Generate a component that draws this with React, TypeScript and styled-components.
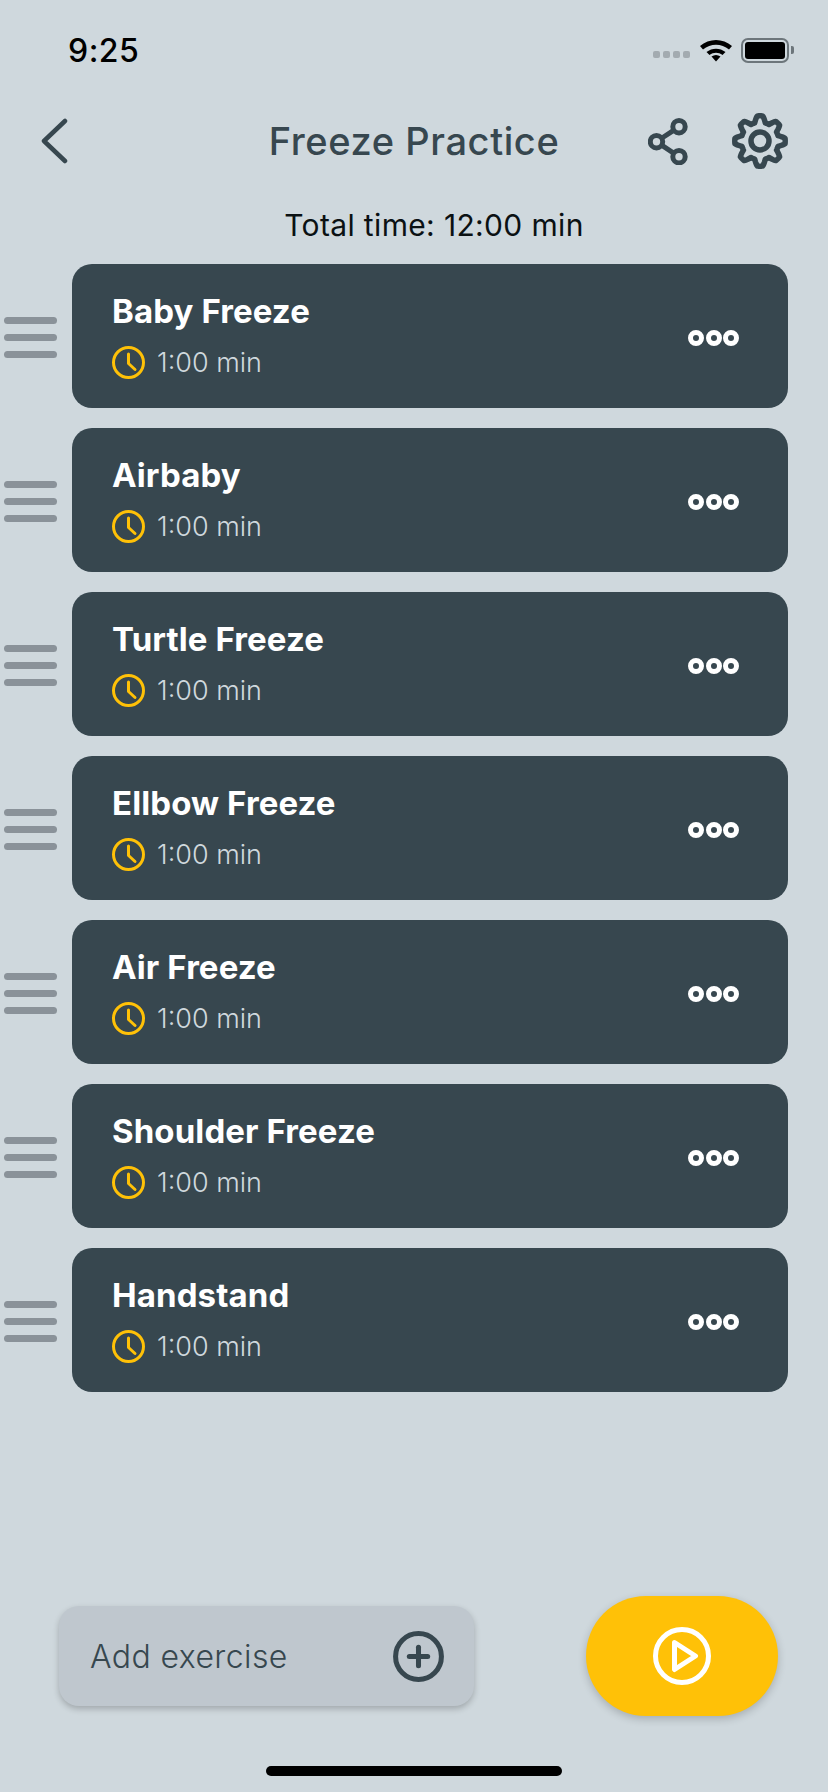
import React from "react";
import styled, { createGlobalStyle } from "styled-components";
import { CirclePlus } from "lucide-react";

const exercises = [
  "Baby Freeze",
  "Airbaby",
  "Turtle Freeze",
  "Ellbow Freeze",
  "Air Freeze",
  "Shoulder Freeze",
  "Handstand",
];

// outline of the gear, eight rounded teeth around the centre
function gearPath() {
  const points: string[] = [];
  for (let i = 0; i < 240; i++) {
    const angle = (i / 240) * Math.PI * 2;
    const wave = Math.max(-1, Math.min(1, 1.5 * Math.cos(angle * 8)));
    const r = 22 + 3.2 * wave;
    const x = 28 + r * Math.sin(angle);
    const y = 28 - r * Math.cos(angle);
    points.push(`${x.toFixed(2)} ${y.toFixed(2)}`);
  }
  return `M${points.join("L")}Z`;
}

export default function App() {
  return (
    <Page>
      <GlobalStyle />
      <StatusBar>
        <Time>9:25</Time>
        <StatusIcons>
          <Signal>
            <SignalDot />
            <SignalDot />
            <SignalDot />
            <SignalDot />
          </Signal>
          <svg width="32" height="24" viewBox="0 0 32 24">
            <path d="M0 8 C9 0 23 0 32 8 L29 11.5 C21.5 5 10.5 5 3 11.5 Z" fill="#000" />
            <path d="M6.5 14 C12 9.5 20 9.5 25.5 14 L22.5 17 C18.5 14 13.5 14 9.5 17 Z" fill="#000" />
            <path d="M11.5 18.5 C14.5 16.5 17.5 16.5 20.5 18.5 L16 23.5 Z" fill="#000" />
          </svg>
          <Battery>
            <BatteryFill />
          </Battery>
          <BatteryCap />
        </StatusIcons>
      </StatusBar>

      <Header>
        <svg width="28" height="46" viewBox="0 0 28 46">
          <path
            d="M25 3 L4 23 L25 43"
            fill="none"
            stroke="#37474f"
            strokeWidth="4.5"
            strokeLinecap="round"
            strokeLinejoin="round"
          />
        </svg>
        <Title>Freeze Practice</Title>
        <HeaderActions>
          <svg width="40" height="47" viewBox="0 0 40 47" fill="none" stroke="#37474f" strokeWidth="5">
            <circle cx="31" cy="8.7" r="6.2" />
            <circle cx="8.5" cy="23.7" r="6.2" />
            <circle cx="31" cy="38.7" r="6.2" />
            <path d="M14 20 L25.6 12.3 M14 27.4 L25.6 35.1" />
          </svg>
          <svg width="56" height="56" viewBox="0 0 56 56" fill="none" stroke="#37474f" strokeWidth="5.5" strokeLinejoin="round">
            <path d={gearPath()} />
            <circle cx="28" cy="28" r="9" />
          </svg>
        </HeaderActions>
      </Header>

      <TotalTime>Total time: 12:00 min</TotalTime>

      <List>
        {exercises.map((name) => (
          <Row key={name}>
            <Grip>
              <GripBar />
              <GripBar />
              <GripBar />
            </Grip>
            <Card>
              <CardText>
                <CardTitle>{name}</CardTitle>
                <Duration>
                  <svg width="33" height="33" viewBox="0 0 33 33" fill="none" stroke="#ffc107" strokeWidth="3" strokeLinecap="round" strokeLinejoin="round">
                    <circle cx="16.5" cy="16.5" r="15" />
                    <path d="M16.5 8 V17.5 L23 23.5" />
                  </svg>
                  <span>1:00 min</span>
                </Duration>
              </CardText>
              <More>
                <MoreDot />
                <MoreDot />
                <MoreDot />
              </More>
            </Card>
          </Row>
        ))}
      </List>

      <Footer>
        <AddButton>
          <span>Add exercise</span>
          <CirclePlus size={55} strokeWidth={2.2} color="#37474f" />
        </AddButton>
        <PlayButton>
          <svg width="58" height="58" viewBox="0 0 58 58" fill="none" stroke="#fff" strokeWidth="5" strokeLinejoin="round">
            <circle cx="29" cy="29" r="26.5" />
            <path d="M21.5 15.5 L42.5 29 L21.5 42.5 Z" />
          </svg>
        </PlayButton>
      </Footer>

      <HomeIndicator />
    </Page>
  );
}

const GlobalStyle = createGlobalStyle`
  html, body {
    margin: 0;
    padding: 0;
    background: #cfd8dd;
  }
`;

const Page = styled.div`
  box-sizing: border-box;
  color: #37474f;
  display: flex;
  flex-direction: column;
  font-family: Inter, "Noto Sans", sans-serif;
  height: 1792px;
  overflow: hidden;
  width: 828px;
`;

const StatusBar = styled.div`
  align-items: center;
  display: flex;
  height: 48px;
  justify-content: space-between;
  margin-top: 26px;
  padding: 0 34px 0 68px;
`;

const Time = styled.div`
  color: #000;
  font-size: 32px;
  font-weight: 500;
  letter-spacing: 0.5px;
`;

const StatusIcons = styled.div`
  align-items: center;
  display: flex;
`;

const Signal = styled.div`
  align-self: flex-end;
  display: flex;
  gap: 3px;
  margin: 0 10px 5px 0;
`;

const SignalDot = styled.div`
  background: #a3abb0;
  border-radius: 2px;
  height: 7px;
  width: 7px;
`;

const Battery = styled.div`
  border: 2px solid #6d767b;
  border-radius: 7px;
  box-sizing: border-box;
  height: 25px;
  margin-left: 9px;
  padding: 2px;
  width: 48px;
`;

const BatteryFill = styled.div`
  background: #000;
  border-radius: 3px;
  height: 100%;
`;

const BatteryCap = styled.div`
  background: #6d767b;
  border-radius: 0 2px 2px 0;
  height: 8px;
  margin-left: 2px;
  width: 3px;
`;

const Header = styled.div`
  align-items: center;
  display: grid;
  grid-template-columns: 1fr auto 1fr;
  height: 76px;
  margin-top: 29px;
  padding: 0 40px;
`;

const Title = styled.div`
  font-size: 38px;
  font-weight: 500;
  letter-spacing: 0.6px;
`;

const HeaderActions = styled.div`
  align-items: center;
  display: flex;
  gap: 44px;
  justify-self: end;
`;

const TotalTime = styled.div`
  color: #0b1113;
  font-size: 30px;
  letter-spacing: 0.35px;
  margin-top: 28px;
  padding-left: 40px;
  text-align: center;
`;

const List = styled.div`
  display: flex;
  flex-direction: column;
  gap: 20px;
  margin-top: 21px;
`;

const Row = styled.div`
  align-items: center;
  display: flex;
  padding: 0 40px 0 4px;
`;

const Grip = styled.div`
  display: flex;
  flex-direction: column;
  gap: 10px;
  margin-right: 15px;
  margin-top: 3px;
  width: 53px;
`;

const GripBar = styled.div`
  background: #8a9299;
  border-radius: 4px;
  height: 7px;
`;

const Card = styled.div`
  align-items: center;
  background: #37474f;
  border-radius: 20px;
  display: flex;
  flex: 1;
  height: 144px;
  justify-content: space-between;
  padding: 0 49px 0 40px;
`;

const CardText = styled.div`
  display: flex;
  flex-direction: column;
  gap: 15px;
  margin-top: -2px;
`;

const CardTitle = styled.div`
  color: #fff;
  font-size: 33px;
  font-weight: 650;
  letter-spacing: 0.1px;
`;

const Duration = styled.div`
  align-items: center;
  color: #cfd8dd;
  display: flex;
  font-size: 27px;
  font-weight: 300;
  gap: 12px;
`;

const More = styled.div`
  display: flex;
  gap: 1.5px;
  margin-top: 4px;
`;

const MoreDot = styled.div`
  border: 5.5px solid #fff;
  border-radius: 50%;
  box-sizing: border-box;
  height: 16px;
  width: 16px;
`;

const Footer = styled.div`
  align-items: center;
  display: flex;
  justify-content: space-between;
  margin-top: auto;
  padding: 0 50px 0 59px;
`;

const AddButton = styled.div`
  align-items: center;
  background: #bfc7ce;
  border-radius: 20px;
  box-shadow: 0 3px 6px rgba(0, 0, 0, 0.22);
  box-sizing: border-box;
  display: flex;
  font-size: 32px;
  font-weight: 300;
  height: 100px;
  justify-content: space-between;
  letter-spacing: 0.4px;
  padding: 0 28px 0 31px;
  width: 415px;
`;

const PlayButton = styled.div`
  align-items: center;
  background: #ffc107;
  border-radius: 60px;
  box-shadow: 0 3px 8px rgba(0, 0, 0, 0.2);
  display: flex;
  height: 120px;
  justify-content: center;
  width: 192px;
`;

const HomeIndicator = styled.div`
  align-self: center;
  background: #000;
  border-radius: 5px;
  flex-shrink: 0;
  height: 10px;
  margin: 50px 0 16px;
  width: 296px;
`;
